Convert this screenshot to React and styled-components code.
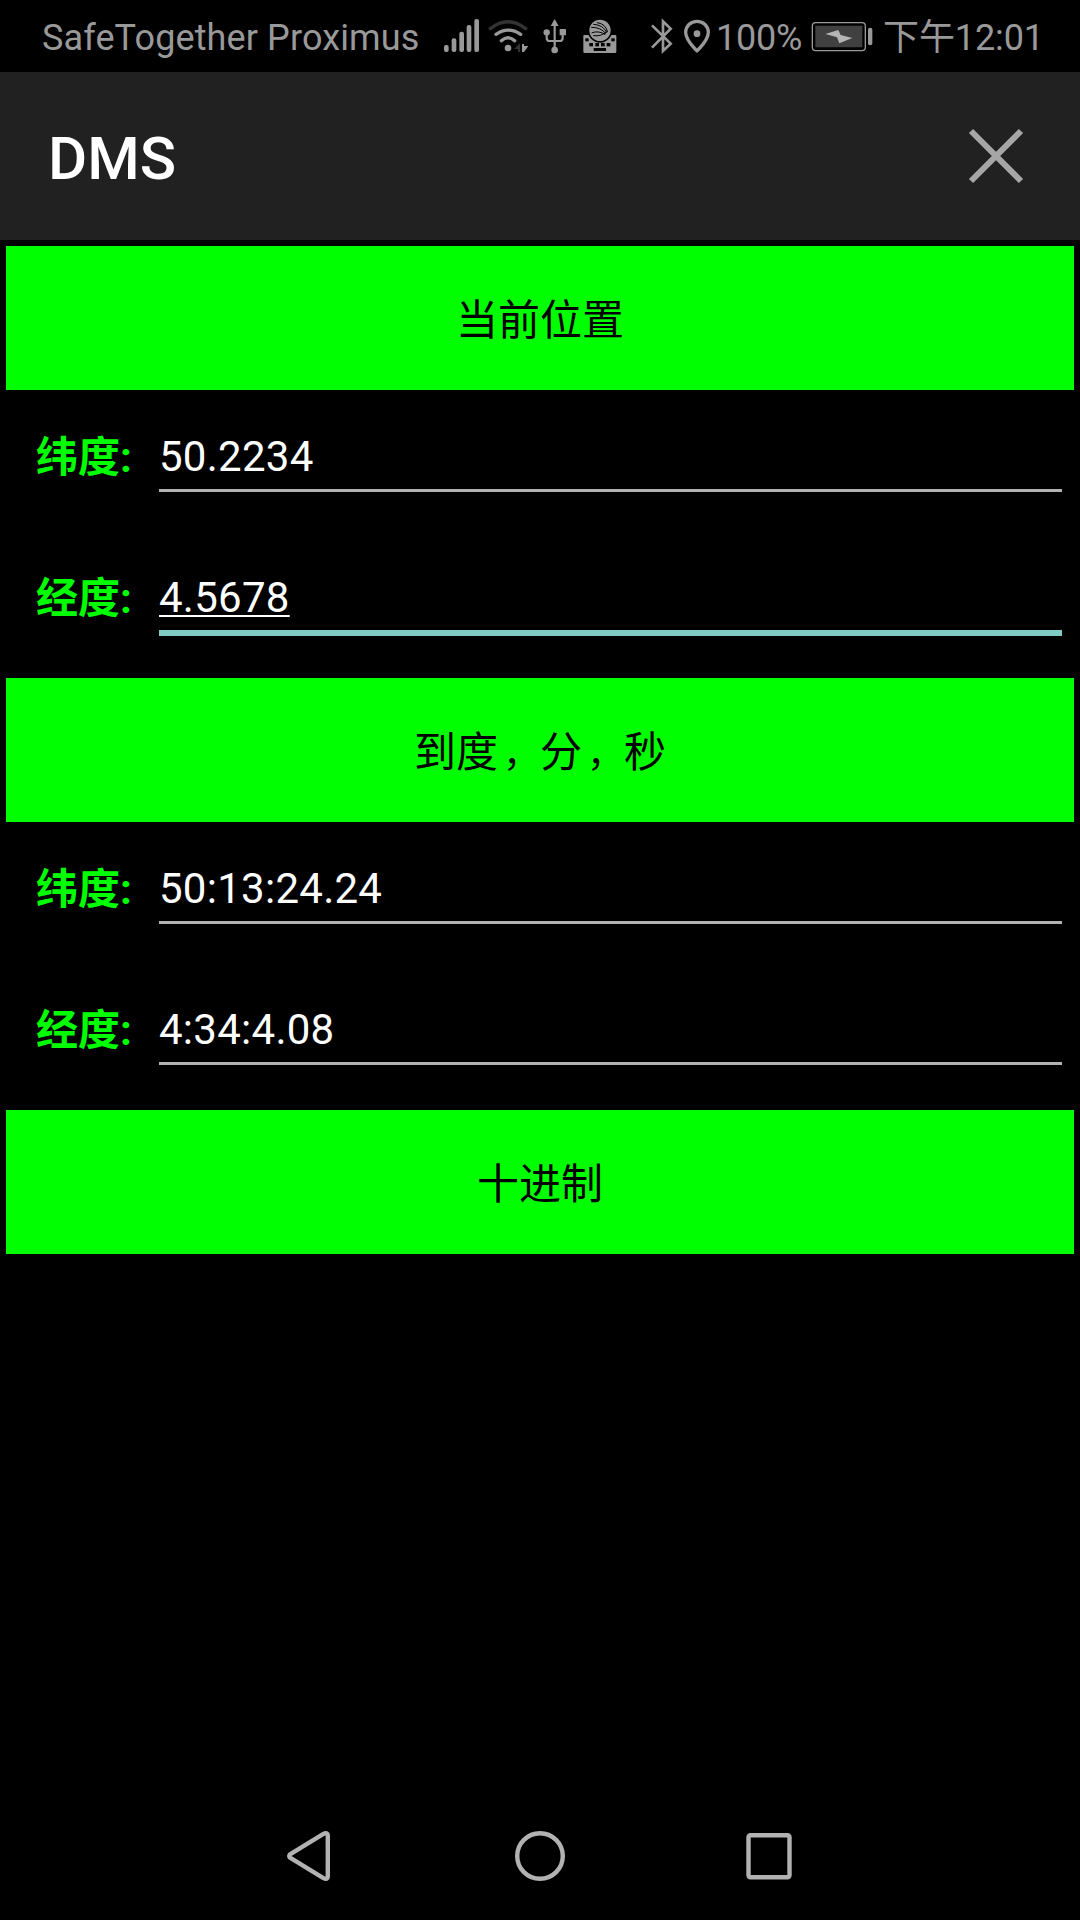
import styled, { createGlobalStyle } from "styled-components";

const COLORS = {
  BACKGROUND: "#000000",
  HEADER: "#212121",
  GREEN: "#00ff00",
  STATUS: "#999999",
  DIM: "#333333",
  LINE: "#b2b2b2",
  FOCUS: "#80cbc4",
  TEXT: "#ffffff",
};

const GlobalStyle = createGlobalStyle`
  body {
    margin: 0;
    background: ${COLORS.BACKGROUND};
  }
`;

const Screen = styled.div`
  display: flex;
  flex-direction: column;
  width: 1080px;
  height: 1920px;
  overflow: hidden;
  background: ${COLORS.BACKGROUND};
  font-family: Roboto, "Noto Sans CJK SC", sans-serif;
`;

const StatusBar = styled.div`
  display: flex;
  flex: none;
  box-sizing: border-box;
  height: 72px;
  padding-left: 42px;
  color: ${COLORS.STATUS};
`;

const StatusText = styled.div`
  flex: none;
  box-sizing: border-box;
  width: ${(props) => props.$width}px;
  padding-top: 2px;
  padding-left: ${(props) => props.$indent || 0}px;
  font-size: 36px;
  line-height: 72px;
  letter-spacing: ${(props) => props.$spacing || 0}px;
  white-space: nowrap;
`;

const StatusIcon = styled.svg`
  display: block;
  flex: none;
  height: 72px;
  width: ${(props) => props.$width}px;
  margin-left: ${(props) => props.$gap || 0}px;
`;

const Header = styled.header`
  display: flex;
  flex: none;
  align-items: center;
  justify-content: space-between;
  box-sizing: border-box;
  height: 168px;
  padding: 0 56px 0 48px;
  background: ${COLORS.HEADER};
`;

const Title = styled.h1`
  margin: 0;
  padding-top: 6px;
  color: ${COLORS.TEXT};
  font-size: 60px;
  font-weight: 500;
  line-height: 70px;
`;

const CloseIcon = styled.svg`
  width: 56px;
  height: 56px;
`;

const Content = styled.main`
  flex: 1;
  padding: 6px 6px 0;
`;

const ActionButton = styled.button`
  display: block;
  box-sizing: border-box;
  width: 100%;
  height: 144px;
  padding: 6px 0 0;
  border: 0;
  background: ${COLORS.GREEN};
  color: #000000;
  font-family: inherit;
  font-size: 42px;
  line-height: 138px;
`;

const Comma = styled.span`
  margin-left: 5px;
  font-size: 37px;
  line-height: 1;
`;

const Fields = styled.div`
  padding: 3px 12px 3px 30px;
`;

const FieldRow = styled.label`
  display: flex;
  height: 141px;
`;

const FieldLabel = styled.span`
  flex: none;
  width: 123px;
  padding-top: 35px;
  color: ${COLORS.GREEN};
  font-size: 42px;
  font-weight: 700;
  line-height: 60px;
`;

const FieldValue = styled.div`
  flex: 1;
  box-sizing: border-box;
  height: ${(props) => (props.$focused ? 102 : 99)}px;
  padding-top: 34px;
  border-bottom: ${(props) =>
    props.$focused ? `6px solid ${COLORS.FOCUS}` : `3px solid ${COLORS.LINE}`};
  color: ${COLORS.TEXT};
  font-size: 42px;
  line-height: 60px;
  letter-spacing: 0.27px;
`;

const Composing = styled.span`
  text-decoration: underline;
  text-decoration-thickness: 2px;
  text-decoration-skip-ink: none;
  text-underline-offset: 3px;
`;

const NavBar = styled.nav`
  display: flex;
  flex: none;
  justify-content: center;
  height: 128px;
`;

const NavIcon = styled.svg`
  width: 228px;
  height: 128px;
  fill: none;
  stroke: ${COLORS.LINE};
  stroke-width: 4.4;
  stroke-linejoin: round;
`;

const SignalIcon = () => (
  <StatusIcon $width={36} viewBox="42 0 108 216" fill={COLORS.STATUS}>
    <rect x="42" y="135" width="14" height="21" rx="6" />
    <rect x="65" y="115" width="14" height="41" rx="6" />
    <rect x="88" y="95" width="14" height="61" rx="6" />
    <rect x="110" y="75" width="14" height="81" rx="6" />
    <rect x="133" y="57" width="14" height="99" rx="6" />
  </StatusIcon>
);

const WifiIcon = () => (
  <StatusIcon $width={42} $gap={8} viewBox="174 0 126 216" fill="none" strokeWidth="10" strokeLinecap="round">
    <path d="M181 86Q234 45 287 86" stroke={COLORS.DIM} />
    <path d="M198 103Q235 78 272 103" stroke={COLORS.STATUS} />
    <path d="M214 122Q234 104 254 122" stroke={COLORS.STATUS} />
    <circle cx="234" cy="144" r="10" fill={COLORS.STATUS} />
    <path d="M252 147L270 130V156H264V147Z" fill={COLORS.DIM} />
    <path d="M276 132H282V138H295L282 156H276Z" fill={COLORS.STATUS} />
  </StatusIcon>
);

const UsbIcon = () => (
  <StatusIcon $width={24} $gap={13} viewBox="338 0 72 216" fill={COLORS.STATUS}>
    <path d="M373 57L385 78H361Z" />
    <circle cx="349" cy="97" r="9.5" />
    <rect x="388" y="87" width="19" height="19" rx="2" />
    <circle cx="373" cy="150" r="10" />
    <path
      d="M373 74V148M349 98V113Q349 123 358 123H388Q397 123 397 113V98"
      fill="none"
      stroke={COLORS.STATUS}
      strokeWidth="6.5"
    />
  </StatusIcon>
);

const KeyboardIcon = () => (
  <StatusIcon $width={34} $gap={16} viewBox="458 0 102 216">
    <path d="M462 105H555Q558 105 558 108V155Q558 159 554 159H463Q459 159 459 155V108Q459 105 462 105Z" fill={COLORS.STATUS} />
    <circle cx="509" cy="91" r="37" fill={COLORS.BACKGROUND} />
    <circle cx="509" cy="91" r="32" fill={COLORS.STATUS} />
    <g fill={COLORS.BACKGROUND}>
      <rect x="465" y="115" width="10" height="9" />
      <rect x="543" y="115" width="10" height="9" />
      <rect x="477" y="129" width="11" height="10" />
      <rect x="495" y="129" width="11" height="10" />
      <rect x="512" y="129" width="11" height="10" />
      <rect x="529" y="129" width="11" height="10" />
      <rect x="490" y="144" width="37" height="9" />
    </g>
    <g fill="none" stroke={COLORS.BACKGROUND} strokeWidth="3" strokeLinecap="round">
      <path d="M501 68Q526 71 531 94" />
      <path d="M490 73Q519 75 529 97" />
      <path d="M484 82Q510 81 526 100" />
      <path d="M485 98Q506 91 524 103" />
      <path d="M490 107Q512 111 531 94" />
    </g>
  </StatusIcon>
);

const BluetoothIcon = () => (
  <StatusIcon $width={22} $gap={34} viewBox="62 0 66 216" fill="none" stroke={COLORS.STATUS} strokeWidth="8">
    <path d="M65 76L121 131L98 153V64L121 86L65 143" />
  </StatusIcon>
);

const LocationIcon = () => (
  <StatusIcon $width={28} $gap={10} viewBox="159 0 84 216" fill="none">
    <path
      d="M201 153C190 140 167 122 167 97C167 78 182 64 201 64S235 78 235 97C235 122 212 140 201 153Z"
      stroke={COLORS.STATUS}
      strokeWidth="10"
      strokeLinejoin="round"
    />
    <circle cx="201" cy="101" r="10" fill={COLORS.STATUS} />
  </StatusIcon>
);

const BatteryIcon = () => (
  <StatusIcon $width={62} viewBox="543 0 186 216">
    <rect x="547" y="68" width="159" height="84" rx="10" fill="none" stroke={COLORS.STATUS} strokeWidth="4" />
    <rect x="556" y="77" width="141" height="65" rx="2" fill="#404040" />
    <path d="M586 102L625 90L632 105L667 114L628 130L621 112Z" fill="#b5b5b5" />
    <rect x="714" y="83" width="13" height="53" rx="6" fill={COLORS.STATUS} />
  </StatusIcon>
);

const Field = ({ label, value, focused }) => (
  <FieldRow>
    <FieldLabel>{label}</FieldLabel>
    <FieldValue $focused={focused}>
      {focused ? <Composing>{value}</Composing> : value}
    </FieldValue>
  </FieldRow>
);

const App = () => (
  <>
    <GlobalStyle />
    <Screen>
      <StatusBar>
        <StatusText $width={402} $spacing={0.12}>SafeTogether Proximus</StatusText>
        <SignalIcon />
        <WifiIcon />
        <UsbIcon />
        <KeyboardIcon />
        <BluetoothIcon />
        <LocationIcon />
        <StatusText $width={100} $indent={5} $spacing={-0.2}>100%</StatusText>
        <BatteryIcon />
        <StatusText $width={180} $indent={10} $spacing={-0.1}>下午12:01</StatusText>
      </StatusBar>
      <Header>
        <Title>DMS</Title>
        <CloseIcon viewBox="0 0 56 56" fill="none" stroke="#a6a6a6" strokeWidth="6">
          <path d="M3 3L53 53M53 3L3 53" />
        </CloseIcon>
      </Header>
      <Content>
        <ActionButton>当前位置</ActionButton>
        <Fields>
          <Field label="纬度:" value="50.2234" />
          <Field label="经度:" value="4.5678" focused />
        </Fields>
        <ActionButton>
          到度<Comma>，</Comma>分<Comma>，</Comma>秒
        </ActionButton>
        <Fields>
          <Field label="纬度:" value="50:13:24.24" />
          <Field label="经度:" value="4:34:4.08" />
        </Fields>
        <ActionButton>十进制</ActionButton>
      </Content>
      <NavBar>
        <NavIcon viewBox="0 0 228 128">
          <path d="M92 62.3L125 42.2Q129.8 39.5 129.8 44V84Q129.8 88.5 125 85.8L92 65.7Q90.6 64 92 62.3Z" />
        </NavIcon>
        <NavIcon viewBox="0 0 228 128">
          <circle cx="114" cy="64" r="22.8" />
        </NavIcon>
        <NavIcon viewBox="0 0 228 128">
          <rect x="94.5" y="43.2" width="41" height="42" rx="2" />
        </NavIcon>
      </NavBar>
    </Screen>
  </>
);

export default App;
